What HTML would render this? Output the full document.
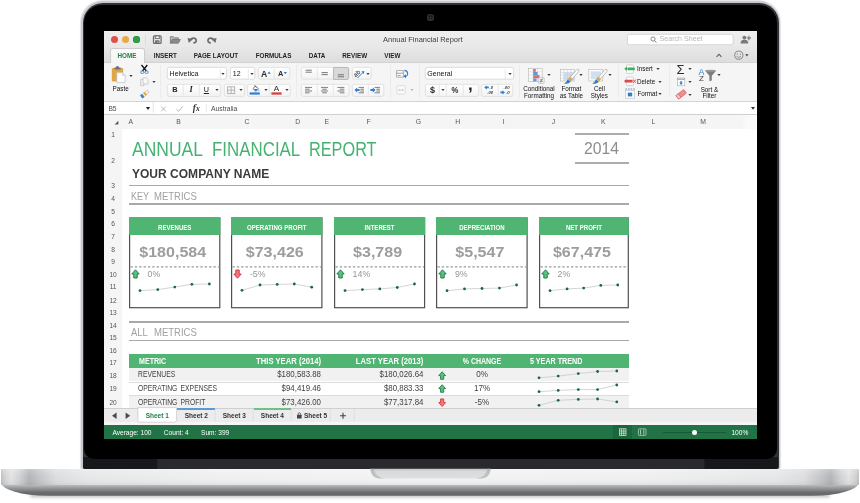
<!DOCTYPE html>
<html lang="en">
<head>
<meta charset="utf-8">
<title>Annual Financial Report</title>
<style>
html,body{margin:0;padding:0;background:#fff;}
body{width:860px;height:503px;overflow:hidden;font-family:"Liberation Sans",sans-serif;}
#stage{position:relative;width:860px;height:503px;overflow:hidden;background:#fff;}
.a{position:absolute;}
.t{position:absolute;white-space:nowrap;line-height:1;transform-origin:0 50%;}
.tc{position:absolute;white-space:nowrap;line-height:1;text-align:center;}
.tr{position:absolute;white-space:nowrap;line-height:1;text-align:right;transform-origin:100% 50%;}
svg{overflow:visible;}
/* ---------- laptop ---------- */
#lidrim{left:80.6px;top:0.8px;width:699.9px;height:468.2px;border-radius:22px 22px 2px 2px;background:#c6c8cc;box-shadow:0 0 0.8px 0.3px #e4e5e8;}
#lid{left:82.5px;top:3px;width:696.3px;height:466px;border-radius:20px 20px 2px 2px;background:#303236;}
#lidin{left:84.2px;top:4.8px;width:692.9px;height:454.4px;border-radius:18px 18px 10px 10px;background:#000;}
#hinge{left:83px;top:457px;width:695.3px;height:12px;background:linear-gradient(90deg,#17181b 0,#17181b 10.6%,#282a2e 10.8%,#282a2e 89.3%,#17181b 89.5%);border-radius:0 0 2px 2px;}
#cam{left:427.4px;top:14.2px;width:6.4px;height:6.4px;border-radius:50%;background:radial-gradient(circle at 50% 45%,#1b1d20 0,#1b1d20 30%,#3a3c40 75%,#2a2c30 100%);}
#cam i{position:absolute;left:2.6px;top:2.4px;width:1.2px;height:1.2px;border-radius:50%;background:#1f7a3f;}
#screen{left:104px;top:31px;width:653px;height:408px;background:#fff;overflow:hidden;}
/* screen is offset: children use image coords via #o */
#o{position:absolute;left:-104px;top:-31px;width:860px;height:503px;will-change:transform;}
/* ---------- chrome ---------- */
#tbar{left:104px;top:31px;width:653px;height:31.6px;background:linear-gradient(#eeeeee,#e9e9e9 45%,#dddddd);}
#tbarline{left:104px;top:62px;width:653px;height:0.7px;background:#d2d2d2;}
#hometab{left:109.6px;top:47.8px;width:35px;height:15px;background:linear-gradient(#fbfbfb,#f5f5f5);border-radius:2.5px 2.5px 0 0;border:0.6px solid #cdcdcd;border-bottom:none;box-sizing:border-box;}
#ribbon{left:104px;top:62.6px;width:653px;height:38.4px;background:#f5f5f5;}
#ribline{left:104px;top:101px;width:653px;height:1px;background:#d3d3d3;}
.tab{font-weight:bold;font-size:6.3px;color:#1f1f1f;top:52.7px;}
.btn{position:absolute;background:linear-gradient(#fefefe,#f4f4f4);border:0.6px solid #d0d0d0;border-radius:2px;box-sizing:border-box;}
.box{position:absolute;background:#fff;border:0.6px solid #cacaca;border-radius:2px;box-sizing:border-box;}
.dv{position:absolute;width:0.6px;background:#d4d4d4;}
.sep{position:absolute;width:1px;background:#ebebeb;top:65px;height:33px;}
.ar{position:absolute;width:0;height:0;margin-left:-0.3px;border-left:1.7px solid transparent;border-right:1.7px solid transparent;border-top:2.3px solid #3a3a3a;}
.rl{font-size:6.3px;color:#111;}
/* ---------- sheet ---------- */
#fbar{left:104px;top:102px;width:653px;height:12px;background:#fff;}
#fbarline{left:104px;top:114px;width:653px;height:0.7px;background:#d0d0d0;}
#colhdr{left:104px;top:114.6px;width:653px;height:14px;background:linear-gradient(90deg,#f5f5f5 0,#f5f5f5 97.6%,#fafafa 98.6%,#fafafa 99.8%,#fff 100%);}
#rowhdr{left:104px;top:128px;width:17.8px;height:280px;background:#f5f5f5;}
.ch{font-size:6.8px;color:#555;top:119.2px;}
.rh{font-size:6.6px;color:#555;left:104.6px;width:17px;text-align:center;}
.hl{position:absolute;background:#a9a9a9;left:129px;width:500px;}
.card{position:absolute;top:217.4px;width:91px;height:91.4px;box-sizing:border-box;border:1.2px solid #505050;background:#fff;}
.card .h{position:absolute;left:-1px;top:-1px;width:91px;height:18px;background:#50b472;}
.card .ht{position:absolute;left:-1px;width:91px;top:4.9px;text-align:center;color:#fff;font-weight:bold;font-size:7.4px;line-height:1;white-space:nowrap;transform:scaleX(0.82);}
.card .v{position:absolute;left:-3.3px;width:91px;top:25.6px;text-align:center;color:#9d9d9d;font-weight:bold;font-size:14.6px;line-height:1;white-space:nowrap;transform:scaleX(1.08);}
.card .d{position:absolute;left:0;top:47.6px;}
.card .p{position:absolute;left:17.6px;top:52.6px;color:#969696;font-size:8.8px;line-height:1;}
.cht{top:223.6px;color:#fff;font-weight:bold;font-size:7.4px;transform:scaleX(0.82);}
.cv{top:244.5px;color:#9d9d9d;font-weight:bold;font-size:14.6px;transform:scaleX(1.1);}
.cp{top:269.9px;color:#969696;font-size:8.8px;}
.green{background:#50b472;}
.cell{font-size:9.2px;color:#414141;}
.sbt{font-size:6.6px;color:#fff;top:429.6px;}
.sht{font-size:6.5px;color:#333;top:412.9px;font-weight:bold;}
</style>
</head>
<body>
<div id="stage">
  <div id="lidrim" class="a"></div>
  <div id="lid" class="a"></div>
  <div id="hinge" class="a"></div>
  <div id="lidin" class="a"></div>
  <div id="cam" class="a"><i></i></div>
  <svg class="a" style="left:0;top:462px" width="860" height="41" viewBox="0 462 860 41">
    <defs>
      <linearGradient id="btng" x1="0" x2="0" y1="0" y2="1"><stop offset="0" stop-color="#ffffff"/><stop offset="1" stop-color="#f3f3f3"/></linearGradient>
      <linearGradient id="bh" x1="0" x2="860" y1="0" y2="0" gradientUnits="userSpaceOnUse">
        <stop offset="0" stop-color="#b9babc"/><stop offset="0.005" stop-color="#cfd0d2"/><stop offset="0.013" stop-color="#e2e3e4"/>
        <stop offset="0.022" stop-color="#d2d3d5"/><stop offset="0.034" stop-color="#b3b4b7"/><stop offset="0.045" stop-color="#c3c4c6"/><stop offset="0.065" stop-color="#dcdddf"/><stop offset="0.1" stop-color="#e6e7e8"/>
        <stop offset="0.25" stop-color="#efeff0"/><stop offset="0.5" stop-color="#f3f3f4"/><stop offset="0.75" stop-color="#efeff0"/>
        <stop offset="0.9" stop-color="#e6e7e8"/><stop offset="0.935" stop-color="#dcdddf"/><stop offset="0.955" stop-color="#c3c4c6"/><stop offset="0.966" stop-color="#b3b4b7"/><stop offset="0.978" stop-color="#d2d3d5"/>
        <stop offset="0.987" stop-color="#e2e3e4"/><stop offset="0.995" stop-color="#cfd0d2"/><stop offset="1" stop-color="#b9babc"/>
      </linearGradient>
      <filter id="blur1" x="-5%" y="-100%" width="110%" height="300%"><feGaussianBlur stdDeviation="1.6"/></filter>
      <linearGradient id="bt" x1="0" x2="0" y1="469" y2="485" gradientUnits="userSpaceOnUse"><stop offset="0" stop-color="#fff" stop-opacity="0.25"/><stop offset="0.5" stop-color="#fff" stop-opacity="0"/><stop offset="1" stop-color="#000" stop-opacity="0.06"/></linearGradient>
      <linearGradient id="bv" x1="0" x2="0" y1="484" y2="496" gradientUnits="userSpaceOnUse">
        <stop offset="0" stop-color="#c6c7c9"/><stop offset="0.3" stop-color="#9d9ea0"/><stop offset="0.7" stop-color="#6c6d6f"/><stop offset="1" stop-color="#626365"/>
      </linearGradient>
      <linearGradient id="bs" x1="0" x2="0" y1="494" y2="501" gradientUnits="userSpaceOnUse">
        <stop offset="0" stop-color="#bdbdbd"/><stop offset="1" stop-color="#ffffff"/>
      </linearGradient>
      <linearGradient id="nt" x1="0" x2="0" y1="469" y2="478" gradientUnits="userSpaceOnUse">
        <stop offset="0" stop-color="#c2c3c5"/><stop offset="0.25" stop-color="#d8d9da"/><stop offset="1" stop-color="#dedfe0"/>
      </linearGradient>
    </defs>
    <rect x="30" y="493" width="800" height="4.5" rx="2" fill="#9a9a9a" opacity="0.55" filter="url(#blur1)"/>
    <path d="M1.5 484 H858.5 Q857 488 846 491.5 Q832 495.8 812 495.8 H48 Q28 495.8 14 491.5 Q3 488 1.5 484Z" fill="url(#bv)"/>
    <path d="M1 470.2 Q1 469 2.2 469 H857.8 Q859 469 859 470.2 V484 Q859 485 857.5 485 H2.5 Q1 485 1 484Z" fill="url(#bh)"/>
    <rect x="1" y="469" width="858" height="16" fill="url(#bt)"/>
    <path d="M370.2 468.8 H490.8 Q489.6 478.4 481.6 478.4 H379.4 Q371.4 478.4 370.2 468.8Z" fill="url(#nt)"/>
    <path d="M370.2 468.8 Q371.4 478.4 379.4 478.4 H385 Q376 478 373.4 468.8Z" fill="#a9aaac" opacity="0.55"/>
    <path d="M490.8 468.8 Q489.6 478.4 481.6 478.4 H476 Q485 478 487.6 468.8Z" fill="#a9aaac" opacity="0.55"/>
  </svg>
  <div id="screen" class="a"><div id="o">
    <!-- title + tab row -->
    <div id="tbar" class="a"></div>
    <div id="tbarline" class="a"></div>
    <div id="ribbon" class="a"></div>
    <div id="hometab" class="a"></div>
    <div id="ribline" class="a"></div>
    <!-- traffic lights -->
    <div class="a" style="left:110.6px;top:36px;width:7px;height:7px;border-radius:50%;background:#e0504b;"></div>
    <div class="a" style="left:121.8px;top:36px;width:7px;height:7px;border-radius:50%;background:#e6aa47;"></div>
    <div class="a" style="left:132.9px;top:36px;width:7px;height:7px;border-radius:50%;background:#2f9f47;box-shadow:inset 0 0 0 0.6px #1f8a3a;"></div>
    <div class="a" style="left:145.4px;top:35px;width:1px;height:9.5px;background:#dcdcdc;"></div>
    <!-- quick access icons -->
    <svg class="a" style="left:152px;top:34px" width="66" height="11" viewBox="152 34 66 11">
      <g fill="none" stroke="#6c6c6c">
        <rect x="153.5" y="35.9" width="7.6" height="7.4" rx="0.9" stroke-width="1.25"/>
        <rect x="155.3" y="36" width="4" height="2.6" stroke-width="0.9" fill="#f2f2f2"/>
        <rect x="155.6" y="40.8" width="3.4" height="2.5" stroke-width="0.9" fill="#6c6c6c"/>
        <path d="M157.9 41.4 V43" stroke="#e9e9e9" stroke-width="0.7"/>
      </g>
      <g stroke="#6e6e6e" stroke-width="0.7">
        <path d="M170.4 43.2 V36.6 H173.4 L174.4 37.8 H178.4 V39.4 H172.2 Z" fill="#b9b9b9"/>
        <path d="M170.5 43.2 L172.4 39.4 H180.4 L178.4 43.2 Z" fill="#8a8a8a"/>
      </g>
      <g fill="none" stroke="#6c6c6c" stroke-width="1.7">
        <path d="M190.6 40.4 C191.4 37.4 195.6 37.2 196.2 40.2 C196.5 41.9 195.4 42.9 193.4 42.9"/>
        <path d="M213.6 40.4 C212.8 37.4 208.6 37.2 208 40.2 C207.7 41.9 208.8 42.9 210.8 42.9"/>
      </g>
      <path d="M187.6 38 L192.8 38.9 L188.8 43 Z" fill="#6c6c6c"/>
      <path d="M216.6 38 L211.4 38.9 L215.4 43 Z" fill="#6c6c6c"/>
    </svg>
    <div class="tc" style="left:322.8px;width:200px;top:36.4px;font-size:7.46px;color:#3c3c3c;">Annual Financial Report</div>
    <!-- search box -->
    <svg class="a" style="left:626.2px;top:33.0px" width="108.5" height="13.1" viewBox="626.2 33.0 108.5 13.1"><rect x="627.55" y="34.35" width="105.80" height="10.40" rx="2" fill="#fff" stroke="#c8c8c8" stroke-width="0.7"/></svg>
    <svg class="a" style="left:650px;top:35px" width="8" height="9" viewBox="650 35 8 9"><circle cx="653" cy="39" r="2.1" fill="none" stroke="#6e6e6e" stroke-width="0.8"/><path d="M654.5 40.6 L656.4 42.6" stroke="#6e6e6e" stroke-width="0.9"/></svg>
    <div class="t" style="left:659.6px;top:36.2px;font-size:7.1px;color:#b6b6b6;">Search Sheet</div>
    <!-- share person -->
    <svg class="a" style="left:739px;top:34px" width="13" height="11" viewBox="739 34 13 11">
      <circle cx="744.4" cy="37.6" r="1.9" fill="#7a7a7a"/>
      <path d="M740.6 43.4 C740.6 40.4 742.4 39.8 744.4 39.8 C746.4 39.8 748.2 40.4 748.2 43.4 Z" fill="#7a7a7a"/>
      <path d="M748.9 35.8 V40.2 M746.7 38 H751.1" stroke="#707070" stroke-width="1.1"/>
    </svg>
    <!-- collapse chevron + smiley -->
    <svg class="a" style="left:715px;top:50px" width="40" height="11" viewBox="715 50 40 11">
      <path d="M716.6 56.8 L719 54.2 L721.4 56.8" fill="none" stroke="#5a5a5a" stroke-width="1.1"/>
      <circle cx="738.8" cy="55.2" r="4.1" fill="none" stroke="#5f5f5f" stroke-width="0.7"/>
      <circle cx="737.3" cy="54" r="0.55" fill="#5f5f5f"/><circle cx="740.3" cy="54" r="0.55" fill="#5f5f5f"/>
      <path d="M736.6 56.4 Q738.8 58.4 741 56.4" fill="none" stroke="#5f5f5f" stroke-width="0.6"/>
      <path d="M745.2 54.3 H748.6 L746.9 56.5 Z" fill="#4a4a4a"/>
    </svg>
    <!-- tabs -->
    <div class="tc tab" style="left:109.8px;width:34.4px;color:#1f7f45;">HOME</div>
    <div class="t tab" style="left:153.8px;">INSERT</div>
    <div class="t tab" style="left:193.7px;">PAGE LAYOUT</div>
    <div class="t tab" style="left:255.7px;">FORMULAS</div>
    <div class="t tab" style="left:308.8px;">DATA</div>
    <div class="t tab" style="left:342.3px;">REVIEW</div>
    <div class="t tab" style="left:384.3px;">VIEW</div>
    <!-- ===== ribbon ===== -->
    <!-- paste -->
    <svg class="a" style="left:110px;top:64px" width="24" height="22" viewBox="110 64 24 22">
      <rect x="111.8" y="68" width="11.4" height="13.6" rx="1" fill="#e2a545"/>
      <path d="M114.4 68.6 V67.6 H116 C116 65.6 119 65.6 119 67.6 H120.6 V68.6 Q120.6 69.6 119.6 69.6 H115.4 Q114.4 69.6 114.4 68.6Z" fill="#6f7276"/>
      <path d="M116.8 72.6 H122.6 L125.2 75.2 V82.6 H116.8 Z" fill="#fbfbfb" stroke="#b9b9b9" stroke-width="0.6"/>
      <path d="M122.6 72.6 V75.2 H125.2" fill="#e6e6e6" stroke="#b9b9b9" stroke-width="0.5"/>
    </svg>
    <svg class="a" style="left:128.4px;top:73.6px" width="6" height="5" viewBox="128.4 73.6 6 5"><path d="M129.80 74.60 H133.00 L131.40 76.70 Z" fill="#3a3a3a"/></svg>
    <div class="tc rl" style="left:105.6px;width:30px;top:86.3px;">Paste</div>
    <!-- cut -->
    <svg class="a" style="left:139px;top:63px" width="12" height="12" viewBox="139 63 12 12">
      <path d="M141.5 65 L146.4 71 M147.3 65 L142.4 71" stroke="#111" stroke-width="1.3" fill="none"/>
      <ellipse cx="142.3" cy="72.2" rx="1.7" ry="1.3" fill="none" stroke="#3a86d8" stroke-width="0.9"/>
      <ellipse cx="146.6" cy="72.2" rx="1.7" ry="1.3" fill="none" stroke="#3a86d8" stroke-width="0.9"/>
    </svg>
    <!-- copy -->
    <svg class="a" style="left:139px;top:76px" width="18" height="11" viewBox="139 76 18 11">
      <path d="M140.6 79.4 H144 V85.6 H140.6 Z" fill="#f3f3f3" stroke="#bdbdbd" stroke-width="0.7"/>
      <path d="M143 77.8 H146.4 L148 79.4 V84 H143 Z" fill="#f8f8f8" stroke="#bdbdbd" stroke-width="0.7"/>
    </svg>
    <svg class="a" style="left:150.8px;top:79.8px" width="6" height="5" viewBox="150.8 79.8 6 5"><path d="M152.20 80.80 H155.40 L153.80 82.90 Z" fill="#3a3a3a"/></svg>
    <!-- format painter -->
    <svg class="a" style="left:139px;top:89px" width="12" height="11" viewBox="139 89 12 11">
      <g transform="translate(144.4 94.4) scale(0.84) translate(-144.4 -94.4) rotate(-40 144.4 94.4)">
        <rect x="146.2" y="92.8" width="4.2" height="3" rx="0.8" fill="#fbfbfb" stroke="#9a9a9a" stroke-width="0.6"/>
        <rect x="144" y="92" width="2.4" height="4.8" fill="#e6a640"/>
        <rect x="142.6" y="92" width="1.5" height="4.8" fill="#f4f4f4"/>
        <path d="M139.8 92 H142.7 V96.8 H139.8 Q138.8 94.4 139.8 92Z" fill="#2f78c7"/>
        <path d="M141.4 92 V96.8" stroke="#8fbbe8" stroke-width="0.5"/>
      </g>
    </svg>
    <div class="sep" style="left:160.3px;"></div>
    <!-- font name / size -->
    <svg class="a" style="left:166.0px;top:66.2px" width="61.8" height="14.5" viewBox="166.0 66.2 61.8 14.5"><rect x="167.35" y="67.55" width="59.10" height="11.80" rx="2" fill="#fff" stroke="#cdcdcd" stroke-width="0.7"/></svg>
    <div class="t" style="left:169.6px;top:70.2px;font-size:7px;color:#111;">Helvetica</div>
    <svg class="a" style="left:218.5px;top:68.6px" width="3" height="10.0" viewBox="218.5 68.6 3 10.0"><path d="M219.80 68.60 V78.60" stroke="#e0e0e0" stroke-width="0.7"/></svg>
    <svg class="a" style="left:220.2px;top:71.8px" width="6" height="5" viewBox="220.2 71.8 6 5"><path d="M221.60 72.80 H224.80 L223.20 74.90 Z" fill="#3a3a3a"/></svg>
    <svg class="a" style="left:228.8px;top:66.2px" width="27.2" height="14.5" viewBox="228.8 66.2 27.2 14.5"><rect x="230.15" y="67.55" width="24.50" height="11.80" rx="2" fill="#fff" stroke="#cdcdcd" stroke-width="0.7"/></svg>
    <div class="t" style="left:232.8px;top:70.2px;font-size:7px;color:#111;">12</div>
    <svg class="a" style="left:247.0px;top:68.6px" width="3" height="10.0" viewBox="247.0 68.6 3 10.0"><path d="M248.30 68.60 V78.60" stroke="#e0e0e0" stroke-width="0.7"/></svg>
    <svg class="a" style="left:248.6px;top:71.8px" width="6" height="5" viewBox="248.6 71.8 6 5"><path d="M250.00 72.80 H253.20 L251.60 74.90 Z" fill="#3a3a3a"/></svg>
    <!-- grow/shrink font -->
    <svg class="a" style="left:257.4px;top:66.2px" width="34.2" height="14.5" viewBox="257.4 66.2 34.2 14.5"><rect x="258.75" y="67.55" width="31.50" height="11.80" rx="2" fill="url(#btng)" stroke="#d9d9d9" stroke-width="0.7"/></svg>
    <svg class="a" style="left:273.3px;top:68.0px" width="3" height="11.3" viewBox="273.3 68.0 3 11.3"><path d="M274.60 68.00 V79.30" stroke="#e0e0e0" stroke-width="0.7"/></svg>
    <div class="t" style="left:260.8px;top:69px;font-size:9.4px;font-weight:bold;color:#2a2a2a;transform:scaleX(0.92);">A</div>
    <div class="t" style="left:277.8px;top:70.2px;font-size:8px;font-weight:bold;color:#2a2a2a;transform:scaleX(0.92);">A</div>
    <svg class="a" style="left:258px;top:67px" width="33" height="13" viewBox="258 67 33 13">
      <path d="M267.4 73.8 L269.1 71.6 L270.8 73.8 Z" fill="#2f7fd6"/>
      <path d="M283.6 72 L285.3 74.2 L287 72 Z" fill="#2f7fd6"/>
    </svg>
    <!-- B I U -->
    <svg class="a" style="left:166.0px;top:82.5px" width="56.0" height="14.8" viewBox="166.0 82.5 56.0 14.8"><rect x="167.35" y="83.85" width="53.30" height="12.10" rx="2" fill="url(#btng)" stroke="#d9d9d9" stroke-width="0.7"/></svg>
    <svg class="a" style="left:181.8px;top:84.3px" width="3" height="11.3" viewBox="181.8 84.3 3 11.3"><path d="M183.10 84.30 V95.60" stroke="#e0e0e0" stroke-width="0.7"/></svg>
    <svg class="a" style="left:198.0px;top:84.3px" width="3" height="11.3" viewBox="198.0 84.3 3 11.3"><path d="M199.30 84.30 V95.60" stroke="#e0e0e0" stroke-width="0.7"/></svg>
    <div class="tc" style="left:167px;width:16px;top:86.4px;font-size:7.4px;font-weight:bold;color:#222;">B</div>
    <div class="tc" style="left:183px;width:16px;top:86.4px;font-size:8.2px;font-style:italic;font-family:'Liberation Serif',serif;font-weight:bold;color:#222;margin-top:-0.5px;">I</div>
    <div class="tc" style="left:199.4px;width:14px;top:86.4px;font-size:7.2px;color:#222;text-decoration:underline;">U</div>
    <svg class="a" style="left:214.0px;top:88.2px" width="6" height="5" viewBox="214.0 88.2 6 5"><path d="M215.40 89.20 H218.60 L217.00 91.30 Z" fill="#3a3a3a"/></svg>
    <!-- borders -->
    <svg class="a" style="left:222.7px;top:82.5px" width="22.8" height="14.8" viewBox="222.7 82.5 22.8 14.8"><rect x="224.05" y="83.85" width="20.10" height="12.10" rx="2" fill="url(#btng)" stroke="#d9d9d9" stroke-width="0.7"/></svg>
    <svg class="a" style="left:226px;top:85px" width="10" height="10" viewBox="226 85 10 10">
      <rect x="227.6" y="86.8" width="7" height="6.8" fill="none" stroke="#b2b2b2" stroke-width="1"/>
      <path d="M231.1 86.8 V93.6 M227.6 90.2 H234.6" stroke="#b2b2b2" stroke-width="1"/>
    </svg>
    <svg class="a" style="left:238.0px;top:88.2px" width="6" height="5" viewBox="238.0 88.2 6 5"><path d="M239.40 89.20 H242.60 L241.00 91.30 Z" fill="#3a3a3a"/></svg>
    <!-- fill / font colour -->
    <svg class="a" style="left:246.0px;top:82.5px" width="45.6" height="14.8" viewBox="246.0 82.5 45.6 14.8"><rect x="247.35" y="83.85" width="42.90" height="12.10" rx="2" fill="url(#btng)" stroke="#d9d9d9" stroke-width="0.7"/></svg>
    <svg class="a" style="left:268.0px;top:84.3px" width="3" height="11.3" viewBox="268.0 84.3 3 11.3"><path d="M269.30 84.30 V95.60" stroke="#e0e0e0" stroke-width="0.7"/></svg>
    <svg class="a" style="left:247px;top:84px" width="44" height="12" viewBox="247 84 44 12">
      <rect x="249.6" y="92.4" width="10.2" height="2.2" fill="#2f7fd6"/>
      <path d="M253 88.4 L255.6 86 L258.4 88.8 L255.8 91.4 Z" fill="#fff" stroke="#444" stroke-width="0.7"/>
      <path d="M254.4 85.2 L256.4 87.6" stroke="#444" stroke-width="0.7"/>
      <path d="M253.4 89 L258 89 L255.8 91.2 Z" fill="#2f7fd6"/>
      <path d="M258.9 89.4 Q260 91 258.9 91.6 Q257.9 91 258.9 89.4Z" fill="#2f7fd6"/>
      <rect x="271.4" y="92.4" width="10.2" height="2.2" fill="#d8393b"/>
    </svg>
    <svg class="a" style="left:262.6px;top:88.2px" width="6" height="5" viewBox="262.6 88.2 6 5"><path d="M264.00 89.20 H267.20 L265.60 91.30 Z" fill="#3a3a3a"/></svg>
    <div class="tc" style="left:271.4px;width:10.2px;top:85px;font-size:8px;color:#2a2a2a;">A</div>
    <svg class="a" style="left:284.0px;top:88.2px" width="6" height="5" viewBox="284.0 88.2 6 5"><path d="M285.40 89.20 H288.60 L287.00 91.30 Z" fill="#3a3a3a"/></svg>
    <div class="sep" style="left:295.6px;"></div>
    <!-- vertical align -->
    <svg class="a" style="left:299.6px;top:66.2px" width="50.4" height="14.5" viewBox="299.6 66.2 50.4 14.5"><rect x="300.95" y="67.55" width="47.70" height="11.80" rx="2" fill="url(#btng)" stroke="#d9d9d9" stroke-width="0.7"/></svg>
    <div class="a" style="left:332.6px;top:67.2px;width:16.4px;height:12.5px;background:#d9d9d9;border:0.6px solid #b9b9b9;border-radius:0 2px 2px 0;box-sizing:border-box;"></div>
    <svg class="a" style="left:315.5px;top:68.0px" width="3" height="11.3" viewBox="315.5 68.0 3 11.3"><path d="M316.80 68.00 V79.30" stroke="#e0e0e0" stroke-width="0.7"/></svg>
    <svg class="a" style="left:300px;top:67px" width="50" height="13" viewBox="300 67 50 13">
      <path d="M305.6 70.2 H311.8 M305.6 72.2 H311.8" stroke="#555" stroke-width="0.8"/>
      <path d="M321.6 72.6 H327.8 M321.6 74.6 H327.8" stroke="#555" stroke-width="0.8"/>
      <path d="M337.8 74.8 H344 M337.8 76.8 H344" stroke="#555" stroke-width="0.8"/>
    </svg>
    <!-- orientation -->
    <svg class="a" style="left:350.8px;top:66.2px" width="21.6" height="14.5" viewBox="350.8 66.2 21.6 14.5"><rect x="352.15" y="67.55" width="18.90" height="11.80" rx="2" fill="url(#btng)" stroke="#d9d9d9" stroke-width="0.7"/></svg>
    <svg class="a" style="left:352px;top:67px" width="20" height="13" viewBox="352 67 20 13">
      <text x="353.6" y="75.6" font-size="6.4" fill="#222" font-family="Liberation Sans, sans-serif" transform="rotate(-42 357 74)">ab</text>
      <path d="M357.4 78 L363 72.4" stroke="#2f7fd6" stroke-width="1"/>
      <path d="M364.4 71 L361.4 71.6 L363.8 74 Z" fill="#2f7fd6"/>
    </svg>
    <svg class="a" style="left:364.8px;top:71.8px" width="6" height="5" viewBox="364.8 71.8 6 5"><path d="M366.20 72.80 H369.40 L367.80 74.90 Z" fill="#3a3a3a"/></svg>
    <!-- horizontal align -->
    <svg class="a" style="left:299.6px;top:82.5px" width="50.4" height="14.8" viewBox="299.6 82.5 50.4 14.8"><rect x="300.95" y="83.85" width="47.70" height="12.10" rx="2" fill="url(#btng)" stroke="#d9d9d9" stroke-width="0.7"/></svg>
    <svg class="a" style="left:315.5px;top:84.3px" width="3" height="11.3" viewBox="315.5 84.3 3 11.3"><path d="M316.80 84.30 V95.60" stroke="#e0e0e0" stroke-width="0.7"/></svg>
    <svg class="a" style="left:331.6px;top:84.3px" width="3" height="11.3" viewBox="331.6 84.3 3 11.3"><path d="M332.90 84.30 V95.60" stroke="#e0e0e0" stroke-width="0.7"/></svg>
    <svg class="a" style="left:300px;top:83px" width="50" height="14" viewBox="300 83 50 14">
      <path d="M305 87.4 H312 M305 89.2 H309.6 M305 91 H312 M305 92.8 H309.6" stroke="#555" stroke-width="0.75"/>
      <path d="M321 87.4 H328 M322.2 89.2 H326.8 M321 91 H328 M322.2 92.8 H326.8" stroke="#555" stroke-width="0.75"/>
      <path d="M337.4 87.4 H344.4 M339.8 89.2 H344.4 M337.4 91 H344.4 M339.8 92.8 H344.4" stroke="#555" stroke-width="0.75"/>
    </svg>
    <!-- indent -->
    <svg class="a" style="left:350.8px;top:82.5px" width="34.2" height="14.8" viewBox="350.8 82.5 34.2 14.8"><rect x="352.15" y="83.85" width="31.50" height="12.10" rx="2" fill="url(#btng)" stroke="#d9d9d9" stroke-width="0.7"/></svg>
    <svg class="a" style="left:366.6px;top:84.3px" width="3" height="11.3" viewBox="366.6 84.3 3 11.3"><path d="M367.90 84.30 V95.60" stroke="#e0e0e0" stroke-width="0.7"/></svg>
    <svg class="a" style="left:352px;top:83px" width="33" height="14" viewBox="352 83 33 14">
      <path d="M358.6 87.4 H364 M360.4 89.2 H364 M360.4 91 H364 M358.6 92.8 H364" stroke="#555" stroke-width="0.75"/>
      <path d="M354.4 90.1 L357.2 87.6 V89.1 H359.6 V91.1 H357.2 V92.6 Z" fill="#2f7fd6"/>
      <path d="M374.6 87.4 H380 M376.4 89.2 H380 M376.4 91 H380 M374.6 92.8 H380" stroke="#555" stroke-width="0.75"/>
      <path d="M375.6 90.1 L372.8 87.6 V89.1 H370.4 V91.1 H372.8 V92.6 Z" fill="#2f7fd6"/>
    </svg>
    <div class="sep" style="left:390px;"></div>
    <!-- wrap / merge -->
    <svg class="a" style="left:395px;top:68px" width="20" height="28" viewBox="395 68 20 28">
      <path d="M396.6 70.6 H403.4 V77.2 H396.6 Z" fill="#fdfdfd" stroke="#8e8e8e" stroke-width="0.7"/>
      <path d="M396.6 73.2 H403.4 M397.8 75.4 H400.8" stroke="#7a7a7a" stroke-width="0.7"/>
      <path d="M404.4 70.4 C408.6 70.6 408.6 76.4 405.2 76.4" fill="none" stroke="#2f7fd6" stroke-width="1.1"/>
      <path d="M403.2 76.2 L406 74.2 V78.2 Z" fill="#2f7fd6"/>
      <rect x="396.9" y="85.7" width="8.4" height="8.4" rx="0.8" fill="#fafafa" stroke="#d3d3d3" stroke-width="0.7"/>
      <path d="M398.8 90 H403.4" stroke="#aac8ea" stroke-width="0.8"/>
      <path d="M398.2 90 L399.8 88.9 V91.1 Z M404 90 L402.4 88.9 V91.1 Z" fill="#aac8ea"/>
    </svg>
    <svg class="a" style="left:408.6px;top:88.4px" width="6" height="5" viewBox="408.6 88.4 6 5"><path d="M410.00 89.40 H413.20 L411.60 91.50 Z" fill="#b5b5b5"/></svg>
    <div class="sep" style="left:419.3px;"></div>
    <!-- number format -->
    <svg class="a" style="left:423.6px;top:66.2px" width="91.0" height="14.5" viewBox="423.6 66.2 91.0 14.5"><rect x="424.95" y="67.55" width="88.30" height="11.80" rx="2" fill="#fff" stroke="#cdcdcd" stroke-width="0.7"/></svg>
    <div class="t" style="left:427.3px;top:70.2px;font-size:7px;color:#111;">General</div>
    <svg class="a" style="left:504.4px;top:68.6px" width="3" height="10.0" viewBox="504.4 68.6 3 10.0"><path d="M505.70 68.60 V78.60" stroke="#e0e0e0" stroke-width="0.7"/></svg>
    <svg class="a" style="left:506.6px;top:71.8px" width="6" height="5" viewBox="506.6 71.8 6 5"><path d="M508.00 72.80 H511.20 L509.60 74.90 Z" fill="#3a3a3a"/></svg>
    <svg class="a" style="left:423.6px;top:82.5px" width="56.0" height="14.8" viewBox="423.6 82.5 56.0 14.8"><rect x="424.95" y="83.85" width="53.30" height="12.10" rx="2" fill="url(#btng)" stroke="#d9d9d9" stroke-width="0.7"/></svg>
    <svg class="a" style="left:438.0px;top:84.3px" width="3" height="11.3" viewBox="438.0 84.3 3 11.3"><path d="M439.30 84.30 V95.60" stroke="#e0e0e0" stroke-width="0.7"/></svg>
    <svg class="a" style="left:445.4px;top:84.3px" width="3" height="11.3" viewBox="445.4 84.3 3 11.3"><path d="M446.70 84.30 V95.60" stroke="#e0e0e0" stroke-width="0.7"/></svg>
    <svg class="a" style="left:461.5px;top:84.3px" width="3" height="11.3" viewBox="461.5 84.3 3 11.3"><path d="M462.80 84.30 V95.60" stroke="#e0e0e0" stroke-width="0.7"/></svg>
    <div class="tc" style="left:426.4px;width:12px;top:85.6px;font-size:9px;font-weight:bold;color:#2a2a2a;">$</div>
    <svg class="a" style="left:439.8px;top:88.2px" width="6" height="5" viewBox="439.8 88.2 6 5"><path d="M441.20 89.20 H444.40 L442.80 91.30 Z" fill="#3a3a3a"/></svg>
    <div class="tc" style="left:446.6px;width:16px;top:85.8px;font-size:8.6px;font-weight:bold;color:#2a2a2a;transform:scaleX(0.9);">%</div>
    <div class="tc" style="left:462.4px;width:16px;top:76.2px;font-size:17px;font-weight:bold;color:#222;">,</div>
    <svg class="a" style="left:480.4px;top:82.5px" width="34.2" height="14.8" viewBox="480.4 82.5 34.2 14.8"><rect x="481.75" y="83.85" width="31.50" height="12.10" rx="2" fill="url(#btng)" stroke="#d9d9d9" stroke-width="0.7"/></svg>
    <svg class="a" style="left:496.6px;top:84.3px" width="3" height="11.3" viewBox="496.6 84.3 3 11.3"><path d="M497.90 84.30 V95.60" stroke="#e0e0e0" stroke-width="0.7"/></svg>
    <svg class="a" style="left:481px;top:83px" width="33" height="14" viewBox="481 83 33 14">
      <g font-family="Liberation Sans, sans-serif" font-size="4.3" font-weight="bold" font-style="italic" fill="#3a3a3a">
        <text x="489.6" y="89">.0</text><text x="487.2" y="93.8">.00</text>
        <text x="503.6" y="89">.00</text><text x="506" y="93.8">.0</text>
      </g>
      <path d="M484.2 87.4 L486.8 85.2 V86.5 H488.8 V88.3 H486.8 V89.6 Z" fill="#2f7fd6"/>
      <path d="M505 92.4 L502.4 90.2 V91.5 H500.4 V93.3 H502.4 V94.6 Z" fill="#2f7fd6"/>
    </svg>
    <div class="sep" style="left:518.7px;"></div>
    <!-- conditional formatting -->
    <svg class="a" style="left:527px;top:67px" width="24" height="18" viewBox="527 66 24 18">
      <rect x="528.6" y="67.6" width="13.6" height="13" fill="#fcfcfc" stroke="#b5b5b5" stroke-width="0.6"/>
      <path d="M533 67.6 V80.6 M537.6 67.6 V80.6 M528.6 70.8 H542.2 M528.6 74 H542.2 M528.6 77.2 H542.2" stroke="#cfcfcf" stroke-width="0.5"/>
      <rect x="533.2" y="68" width="2.6" height="2.8" fill="#e26a6a"/>
      <rect x="533.2" y="71" width="4.4" height="3" fill="#5b9bd8"/>
      <rect x="533.2" y="74.2" width="6.4" height="3" fill="#e26a6a"/>
      <rect x="533.2" y="77.4" width="3.4" height="3" fill="#5b9bd8"/>
      <rect x="538.4" y="76.6" width="5.8" height="5.8" rx="0.8" fill="#f7f7f7" stroke="#9a9a9a" stroke-width="0.5"/>
      <path d="M539.8 78.8 H542.8 M539.8 80.4 H542.8 M542.4 77.6 L540.2 81.6" stroke="#444" stroke-width="0.5"/>
    </svg>
    <svg class="a" style="left:545.8px;top:73.4px" width="6" height="5" viewBox="545.8 73.4 6 5"><path d="M547.20 74.40 H550.40 L548.80 76.50 Z" fill="#3a3a3a"/></svg>
    <div class="tc rl" style="left:519px;width:40px;top:86.2px;line-height:6.7px;">Conditional<br>Formatting</div>
    <!-- format as table -->
    <svg class="a" style="left:559px;top:66.6px" width="24" height="18" viewBox="559 66 24 18">
      <rect x="560.6" y="68.6" width="14" height="11.4" fill="#fcfcfc" stroke="#b5b5b5" stroke-width="0.6"/>
      <rect x="563.8" y="71.4" width="10.8" height="8.6" fill="#cfe0f3"/>
      <path d="M563.8 68.6 V80 M567.4 68.6 V80 M571 68.6 V80 M560.6 71.4 H574.6 M560.6 74.2 H574.6 M560.6 77.2 H574.6" stroke="#c4c9cf" stroke-width="0.5"/>
      <path d="M576.8 68.6 Q578 67.8 578.8 68.8 Q579.4 69.6 578.6 70.6 L572.4 78 L570.2 76.2 Z" fill="#fafafa" stroke="#9a9a9a" stroke-width="0.6"/>
      <path d="M569.8 75.8 L572.8 78.2 L570.6 80.8 L567.6 78.4 Z" fill="#e6a640"/>
      <path d="M567.6 78.4 L570.6 80.8 Q568.2 83.6 564 82.6 Q566.8 81.2 567.6 78.4Z" fill="#2f78c7"/>
    </svg>
    <svg class="a" style="left:578.2px;top:73.4px" width="6" height="5" viewBox="578.2 73.4 6 5"><path d="M579.60 74.40 H582.80 L581.20 76.50 Z" fill="#3a3a3a"/></svg>
    <div class="tc rl" style="left:551.4px;width:40px;top:86.2px;line-height:6.7px;">Format<br>as Table</div>
    <!-- cell styles -->
    <svg class="a" style="left:587px;top:66.6px" width="24" height="18" viewBox="587 66 24 18">
      <rect x="588.8" y="68.6" width="14" height="11.4" fill="#fcfcfc" stroke="#b5b5b5" stroke-width="0.6"/>
      <rect x="590.6" y="70.4" width="10.4" height="7.8" fill="#cfe0f3"/>
      <path d="M605 68.6 Q606.2 67.8 607 68.8 Q607.6 69.6 606.8 70.6 L600.6 78 L598.4 76.2 Z" fill="#fafafa" stroke="#9a9a9a" stroke-width="0.6"/>
      <path d="M598 75.8 L601 78.2 L598.8 80.8 L595.8 78.4 Z" fill="#e6a640"/>
      <path d="M595.8 78.4 L598.8 80.8 Q596.4 83.6 592.2 82.6 Q595 81.2 595.8 78.4Z" fill="#2f78c7"/>
    </svg>
    <svg class="a" style="left:606.6px;top:73.4px" width="6" height="5" viewBox="606.6 73.4 6 5"><path d="M608.00 74.40 H611.20 L609.60 76.50 Z" fill="#3a3a3a"/></svg>
    <div class="tc rl" style="left:579.4px;width:40px;top:86.2px;line-height:6.7px;">Cell<br>Styles</div>
    <div class="sep" style="left:617.6px;"></div>
    <!-- insert / delete / format -->
    <svg class="a" style="left:623px;top:63px" width="14" height="37" viewBox="623 63 14 37">
      <rect x="626.4" y="64.8" width="7" height="8.6" rx="1" fill="#fdfdfd" stroke="#b9b9b9" stroke-width="0.6"/>
      <rect x="627.4" y="67.4" width="7.4" height="2.8" rx="0.6" fill="#3fae5d"/>
      <path d="M624.2 68.8 L627 66.6 V71 Z" fill="#3fae5d"/>
      <rect x="626.4" y="77" width="7" height="8.6" rx="1" fill="#fdfdfd" stroke="#b9b9b9" stroke-width="0.6"/>
      <rect x="624.6" y="79.8" width="8" height="2.8" rx="0.6" fill="#e0474a"/>
      <path d="M633.2 79.6 L635.8 82.8 M635.8 79.6 L633.2 82.8" stroke="#e0474a" stroke-width="0.9"/>
      <rect x="625.6" y="90.6" width="8.8" height="7.6" fill="#fdfdfd" stroke="#b9b9b9" stroke-width="0.6"/>
      <rect x="627.8" y="92.6" width="4.4" height="3.8" fill="#2f7fd6"/>
      <path d="M625.4 89 H634.6" stroke="#2f7fd6" stroke-width="0.8" stroke-dasharray="1.6 1"/>
    </svg>
    <div class="t rl" style="left:637px;top:65.6px;">Insert</div><svg class="a" style="left:654.8px;top:67.0px" width="6" height="5" viewBox="654.8 67.0 6 5"><path d="M656.20 68.00 H659.40 L657.80 70.10 Z" fill="#3a3a3a"/></svg>
    <div class="t rl" style="left:637px;top:78.7px;">Delete</div><svg class="a" style="left:656.8px;top:79.6px" width="6" height="5" viewBox="656.8 79.6 6 5"><path d="M658.20 80.60 H661.40 L659.80 82.70 Z" fill="#3a3a3a"/></svg>
    <div class="t rl" style="left:637.4px;top:90.8px;">Format</div><svg class="a" style="left:657.4px;top:92.2px" width="6" height="5" viewBox="657.4 92.2 6 5"><path d="M658.80 93.20 H662.00 L660.40 95.30 Z" fill="#3a3a3a"/></svg>
    <div class="sep" style="left:668.8px;"></div>
    <!-- sigma / fill / clear -->
    <div class="t" style="left:676.4px;top:62.6px;font-size:13px;color:#2e2e2e;">Σ</div><svg class="a" style="left:687.2px;top:66.8px" width="6" height="5" viewBox="687.2 66.8 6 5"><path d="M688.60 67.80 H691.80 L690.20 69.90 Z" fill="#3a3a3a"/></svg>
    <svg class="a" style="left:675px;top:76px" width="13" height="24" viewBox="675 76 13 24">
      <rect x="677.4" y="78" width="7.4" height="7.8" fill="#fdfdfd" stroke="#a9a9a9" stroke-width="0.6"/>
      <path d="M677.4 79.2 H684.8" stroke="#8a8a8a" stroke-width="0.9"/>
      <path d="M681.1 85 L679.2 82.8 H680.4 V81 H681.8 V82.8 H683 Z" fill="#2f7fd6"/>
      <g transform="rotate(-38 681.2 94.3)"><rect x="676.2" y="92" width="10" height="4.6" rx="0.8" fill="#ea8e92" stroke="#d4565b" stroke-width="0.6"/><rect x="676.2" y="92" width="3" height="4.6" rx="0.8" fill="#f3c2c4" stroke="#d4565b" stroke-width="0.6"/></g>
    </svg>
    <svg class="a" style="left:687.2px;top:79.8px" width="6" height="5" viewBox="687.2 79.8 6 5"><path d="M688.60 80.80 H691.80 L690.20 82.90 Z" fill="#3a3a3a"/></svg>
    <svg class="a" style="left:687.2px;top:92.6px" width="6" height="5" viewBox="687.2 92.6 6 5"><path d="M688.60 93.60 H691.80 L690.20 95.70 Z" fill="#3a3a3a"/></svg>
    <!-- sort & filter -->
    <div class="t" style="left:698.4px;top:67.6px;font-size:8.8px;color:#2f7fd6;">A</div>
    <div class="t" style="left:699px;top:75.4px;font-size:8px;color:#3c3c3c;">Z</div>
    <svg class="a" style="left:704px;top:69px" width="14" height="14" viewBox="704 69 14 14">
      <path d="M705.2 70.8 H716 L711.8 75.8 V80.6 L709.4 81.2 V75.8 Z" fill="#7d7d7d"/>
      <ellipse cx="710.6" cy="70.8" rx="5.4" ry="1" fill="#9a9a9a"/>
    </svg>
    <svg class="a" style="left:716.0px;top:73.4px" width="6" height="5" viewBox="716.0 73.4 6 5"><path d="M717.40 74.40 H720.60 L719.00 76.50 Z" fill="#3a3a3a"/></svg>
    <div class="tc rl" style="left:689.4px;width:40px;top:86.7px;line-height:6.7px;">Sort &amp;<br>Filter</div>

    <!-- ===== formula bar ===== -->
    <div id="fbar" class="a"></div><div id="fbarline" class="a"></div>
    <div class="t" style="left:108.4px;top:105.7px;font-size:6.7px;color:#4a4a4a;">B5</div>
    <svg class="a" style="left:145.2px;top:106.2px" width="6" height="5" viewBox="145.2 106.2 6 5"><path d="M146.10 107.20 H150.30 L148.20 110.20 Z" fill="#222"/></svg>
    <svg class="a" style="left:152.0px;top:102.4px" width="3" height="10.8" viewBox="152.0 102.4 3 10.8"><path d="M153.30 102.40 V113.20" stroke="#d9d9d9" stroke-width="0.7"/></svg>
    <svg class="a" style="left:158px;top:103.8px" width="50" height="10" viewBox="158 103 50 10"><path d="M161.2 105.6 L165.8 110.4 M165.8 105.6 L161.2 110.4" stroke="#b4b4b4" stroke-width="0.95" fill="none"/><path d="M176.6 108.4 L178.4 110.4 L182.8 105.4" stroke="#b4b4b4" stroke-width="0.95" fill="none"/></svg>
    <div class="t" style="left:192.8px;top:103.4px;font-size:9.6px;color:#333;font-family:'Liberation Serif',serif;font-style:italic;font-weight:bold;">f<span style="font-size:7.6px;">x</span></div>
    <svg class="a" style="left:205.0px;top:103.6px" width="3" height="8.6" viewBox="205.0 103.6 3 8.6"><path d="M206.30 103.60 V112.20" stroke="#dcdcdc" stroke-width="0.7"/></svg>
    <div class="t" style="left:211px;top:105.7px;font-size:6.76px;color:#4a4a4a;">Australia</div>
    <svg class="a" style="left:749.8px;top:106.0px" width="6" height="5" viewBox="749.8 106.0 6 5"><path d="M750.80 107.00 H754.80 L752.80 109.80 Z" fill="#333"/></svg>
    <!-- ===== headers ===== -->
    <div id="colhdr" class="a"></div><div id="rowhdr" class="a"></div>
    <svg class="a" style="left:114px;top:120px" width="5" height="5" viewBox="114 120 5 5"><path d="M118.4 120.8 V124.6 H114.6 Z" fill="#555"/></svg>
    <div class="tc ch" style="left:122.7px;width:16px;">A</div>
    <div class="tc ch" style="left:170.5px;width:16px;">B</div>
    <div class="tc ch" style="left:239.0px;width:16px;">C</div>
    <div class="tc ch" style="left:289.8px;width:16px;">D</div>
    <div class="tc ch" style="left:318.7px;width:16px;">E</div>
    <div class="tc ch" style="left:360.6px;width:16px;">F</div>
    <div class="tc ch" style="left:410.4px;width:16px;">G</div>
    <div class="tc ch" style="left:449.7px;width:16px;">H</div>
    <div class="tc ch" style="left:495.7px;width:16px;">I</div>
    <div class="tc ch" style="left:545.5px;width:16px;">J</div>
    <div class="tc ch" style="left:595.4px;width:16px;">K</div>
    <div class="tc ch" style="left:645.5px;width:16px;">L</div>
    <div class="tc ch" style="left:695.0px;width:16px;">M</div>
    <div class="tc rh" style="top:132.4px;">1</div>
    <div class="tc rh" style="top:157.5px;">2</div>
    <div class="tc rh" style="top:183.0px;">3</div>
    <div class="tc rh" style="top:196.0px;">4</div>
    <div class="tc rh" style="top:208.5px;">5</div>
    <div class="tc rh" style="top:221.2px;">6</div>
    <div class="tc rh" style="top:233.8px;">7</div>
    <div class="tc rh" style="top:246.7px;">8</div>
    <div class="tc rh" style="top:259.2px;">9</div>
    <div class="tc rh" style="top:271.7px;">10</div>
    <div class="tc rh" style="top:284.3px;">11</div>
    <div class="tc rh" style="top:297.5px;">12</div>
    <div class="tc rh" style="top:310.2px;">13</div>
    <div class="tc rh" style="top:322.5px;">14</div>
    <div class="tc rh" style="top:335.1px;">15</div>
    <div class="tc rh" style="top:348.0px;">16</div>
    <div class="tc rh" style="top:360.3px;">17</div>
    <div class="tc rh" style="top:373.3px;">18</div>
    <div class="tc rh" style="top:386.2px;">19</div>
    <div class="tc rh" style="top:399.5px;">20</div>
    <!-- ===== sheet content ===== -->
    <div class="t" style="left:132.4px;top:139.3px;font-size:20.3px;color:#46b272;transform:scaleX(0.862);">ANNUAL</div>
    <div class="t" style="left:212.2px;top:139.3px;font-size:20.3px;color:#46b272;transform:scaleX(0.833);">FINANCIAL</div>
    <div class="t" style="left:308.9px;top:139.3px;font-size:20.3px;color:#46b272;transform:scaleX(0.803);">REPORT</div>
    <div class="t" style="left:131.6px;top:166.6px;font-size:13px;font-weight:bold;color:#3b3b3b;transform:scaleX(0.925);">YOUR COMPANY NAME</div>
    <div class="hl" style="top:185px;height:1px;"></div>
    <div class="t" style="left:131.2px;top:190.6px;font-size:11.5px;color:#a0a0a0;transform:scaleX(0.782);">KEY</div>
    <div class="t" style="left:154.4px;top:190.6px;font-size:11.5px;color:#a0a0a0;transform:scaleX(0.827);">METRICS</div>
    <div class="hl" style="top:203.4px;height:1.4px;"></div>
    <div class="a" style="left:575px;top:133.2px;width:53.8px;height:1.6px;background:#adadad;"></div>
    <div class="a" style="left:575px;top:162.2px;width:53.8px;height:1.6px;background:#adadad;"></div>
    <div class="t" style="left:584.4px;top:140.4px;font-size:17px;color:#8d8d8d;transform:scaleX(0.925);">2014</div>
    <svg class="a" style="left:128.0px;top:216px" width="93.4" height="94" viewBox="128.0 216 93.4 94"><rect x="129.6" y="218.0" width="90.2" height="89.7" fill="#fff" stroke="#505050" stroke-width="1.2"/><rect x="129.0" y="217.4" width="91.4" height="17.6" fill="#50b472"/><path d="M130.4 266.9 H219.4" stroke="#9a9a9a" stroke-width="1.4" stroke-dasharray="2.4 1.97" fill="none"/></svg>
    <div class="tc cht" style="left:129.0px;width:91.4px;">REVENUES</div>
    <div class="tc cv" style="left:126.7px;width:91.4px;">$180,584</div>
    <div class="t cp" style="left:147.6px;">0%</div>
    <svg class="a" style="left:130.8px;top:269px" width="9" height="10" viewBox="0 0 9 10"><path d="M4.5 0.8 L8.2 5 H6.2 V9 H2.8 V5 H0.8 Z" fill="#5cc283" stroke="#1d7a42" stroke-width="0.95" stroke-linejoin="round"/></svg>
    <svg class="a" style="left:136.8px;top:280.7px" width="75.4" height="12.6" viewBox="136.8 280.7 75.4 12.6"><polyline points="139.8,290.3 157.6,289.3 174.6,286.8 191.7,284.0 209.2,283.7" fill="none" stroke="#c9c9c9" stroke-width="0.8"/><g fill="#186a3c"><circle cx="139.8" cy="290.3" r="1.4"/><circle cx="157.6" cy="289.3" r="1.4"/><circle cx="174.6" cy="286.8" r="1.4"/><circle cx="191.7" cy="284.0" r="1.4"/><circle cx="209.2" cy="283.7" r="1.4"/></g></svg>
    <svg class="a" style="left:230.3px;top:216px" width="93.5" height="94" viewBox="230.3 216 93.5 94"><rect x="231.9" y="218.0" width="90.3" height="89.7" fill="#fff" stroke="#505050" stroke-width="1.2"/><rect x="231.3" y="217.4" width="91.5" height="17.6" fill="#50b472"/><path d="M232.7 266.9 H321.8" stroke="#9a9a9a" stroke-width="1.4" stroke-dasharray="2.4 1.97" fill="none"/></svg>
    <div class="tc cht" style="left:231.3px;width:91.5px;">OPERATING PROFIT</div>
    <div class="tc cv" style="left:229.0px;width:91.5px;">$73,426</div>
    <div class="t cp" style="left:249.9px;">-5%</div>
    <svg class="a" style="left:233.10000000000002px;top:269px" width="9" height="10" viewBox="0 0 9 10"><path d="M4.5 9.2 L8.2 5 H6.2 V1 H2.8 V5 H0.8 Z" fill="#f0797e" stroke="#d5343a" stroke-width="0.95" stroke-linejoin="round"/></svg>
    <svg class="a" style="left:239.0px;top:281.0px" width="75.7" height="12.3" viewBox="239.0 281.0 75.7 12.3"><polyline points="242.0,290.3 260.0,285.0 277.2,284.4 294.3,284.0 311.7,287.2" fill="none" stroke="#c9c9c9" stroke-width="0.8"/><g fill="#186a3c"><circle cx="242.0" cy="290.3" r="1.4"/><circle cx="260.0" cy="285.0" r="1.4"/><circle cx="277.2" cy="284.4" r="1.4"/><circle cx="294.3" cy="284.0" r="1.4"/><circle cx="311.7" cy="287.2" r="1.4"/></g></svg>
    <svg class="a" style="left:333.0px;top:216px" width="93.2" height="94" viewBox="333.0 216 93.2 94"><rect x="334.6" y="218.0" width="90.0" height="89.7" fill="#fff" stroke="#505050" stroke-width="1.2"/><rect x="334.0" y="217.4" width="91.2" height="17.6" fill="#50b472"/><path d="M335.4 266.9 H424.2" stroke="#9a9a9a" stroke-width="1.4" stroke-dasharray="2.4 1.97" fill="none"/></svg>
    <div class="tc cht" style="left:334.0px;width:91.2px;">INTEREST</div>
    <div class="tc cv" style="left:331.7px;width:91.2px;">$3,789</div>
    <div class="t cp" style="left:352.6px;">14%</div>
    <svg class="a" style="left:335.8px;top:269px" width="9" height="10" viewBox="0 0 9 10"><path d="M4.5 0.8 L8.2 5 H6.2 V9 H2.8 V5 H0.8 Z" fill="#5cc283" stroke="#1d7a42" stroke-width="0.95" stroke-linejoin="round"/></svg>
    <svg class="a" style="left:341.9px;top:280.7px" width="75.5" height="12.6" viewBox="341.9 280.7 75.5 12.6"><polyline points="344.9,290.3 362.3,289.3 379.7,288.6 397.2,287.2 414.4,283.7" fill="none" stroke="#c9c9c9" stroke-width="0.8"/><g fill="#186a3c"><circle cx="344.9" cy="290.3" r="1.4"/><circle cx="362.3" cy="289.3" r="1.4"/><circle cx="379.7" cy="288.6" r="1.4"/><circle cx="397.2" cy="287.2" r="1.4"/><circle cx="414.4" cy="283.7" r="1.4"/></g></svg>
    <svg class="a" style="left:435.3px;top:216px" width="93.7" height="94" viewBox="435.3 216 93.7 94"><rect x="436.9" y="218.0" width="90.5" height="89.7" fill="#fff" stroke="#505050" stroke-width="1.2"/><rect x="436.3" y="217.4" width="91.7" height="17.6" fill="#50b472"/><path d="M437.7 266.9 H527.0" stroke="#9a9a9a" stroke-width="1.4" stroke-dasharray="2.4 1.97" fill="none"/></svg>
    <div class="tc cht" style="left:436.3px;width:91.7px;">DEPRECIATION</div>
    <div class="tc cv" style="left:434.0px;width:91.7px;">$5,547</div>
    <div class="t cp" style="left:454.9px;">9%</div>
    <svg class="a" style="left:438.1px;top:269px" width="9" height="10" viewBox="0 0 9 10"><path d="M4.5 0.8 L8.2 5 H6.2 V9 H2.8 V5 H0.8 Z" fill="#5cc283" stroke="#1d7a42" stroke-width="0.95" stroke-linejoin="round"/></svg>
    <svg class="a" style="left:444.2px;top:281.6px" width="75.6" height="11.7" viewBox="444.2 281.6 75.6 11.7"><polyline points="447.2,290.3 464.7,288.5 482.2,288.1 499.7,287.7 516.8,284.6" fill="none" stroke="#c9c9c9" stroke-width="0.8"/><g fill="#186a3c"><circle cx="447.2" cy="290.3" r="1.4"/><circle cx="464.7" cy="288.5" r="1.4"/><circle cx="482.2" cy="288.1" r="1.4"/><circle cx="499.7" cy="287.7" r="1.4"/><circle cx="516.8" cy="284.6" r="1.4"/></g></svg>
    <svg class="a" style="left:537.9px;top:216px" width="91.9" height="94" viewBox="537.9 216 91.9 94"><rect x="539.5" y="218.0" width="88.7" height="89.7" fill="#fff" stroke="#505050" stroke-width="1.2"/><rect x="538.9" y="217.4" width="89.9" height="17.6" fill="#50b472"/><path d="M540.3 266.9 H627.8" stroke="#9a9a9a" stroke-width="1.4" stroke-dasharray="2.4 1.97" fill="none"/></svg>
    <div class="tc cht" style="left:538.9px;width:89.9px;">NET PROFIT</div>
    <div class="tc cv" style="left:536.6px;width:89.9px;">$67,475</div>
    <div class="t cp" style="left:557.5px;">2%</div>
    <svg class="a" style="left:540.6999999999999px;top:269px" width="9" height="10" viewBox="0 0 9 10"><path d="M4.5 0.8 L8.2 5 H6.2 V9 H2.8 V5 H0.8 Z" fill="#5cc283" stroke="#1d7a42" stroke-width="0.95" stroke-linejoin="round"/></svg>
    <svg class="a" style="left:547.0px;top:281.6px" width="73.8" height="11.7" viewBox="547.0 281.6 73.8 11.7"><polyline points="550.0,290.3 567.1,288.5 583.7,287.7 600.8,285.0 617.8,284.6" fill="none" stroke="#c9c9c9" stroke-width="0.8"/><g fill="#186a3c"><circle cx="550.0" cy="290.3" r="1.4"/><circle cx="567.1" cy="288.5" r="1.4"/><circle cx="583.7" cy="287.7" r="1.4"/><circle cx="600.8" cy="285.0" r="1.4"/><circle cx="617.8" cy="284.6" r="1.4"/></g></svg>
    <div class="hl" style="top:321.4px;height:1.3px;"></div>
    <div class="t" style="left:131.4px;top:327px;font-size:11.5px;color:#a0a0a0;transform:scaleX(0.821);">ALL</div>
    <div class="t" style="left:154.4px;top:327px;font-size:11.5px;color:#a0a0a0;transform:scaleX(0.827);">METRICS</div>
    <div class="hl" style="top:339.6px;height:1.4px;"></div>
    <!-- table -->
    <div class="a green" style="left:129px;top:354.2px;width:500px;height:13.6px;"></div>
    <div class="a" style="left:129px;top:367.8px;width:500px;height:13.7px;background:#f1f1f1;"></div>
    <div class="a" style="left:129px;top:381.5px;width:500px;height:0.6px;background:#dcdcdc;"></div>
    <div class="a" style="left:129px;top:395px;width:500px;height:13.2px;background:#f1f1f1;"></div>
    <div class="a" style="left:129px;top:394.7px;width:500px;height:0.6px;background:#dcdcdc;"></div>
    <div class="t" style="left:138.6px;font-size:8.2px;font-weight:bold;color:#fff;top:357.9px;transform:scaleX(0.866);">METRIC</div>
    <div class="tr" style="left:220px;width:101px;font-size:8.2px;font-weight:bold;color:#fff;top:357.9px;transform:scaleX(0.934);">THIS YEAR (2014)</div>
    <div class="tr" style="left:322px;width:101.3px;font-size:8.2px;font-weight:bold;color:#fff;top:357.9px;transform:scaleX(0.934);">LAST YEAR (2013)</div>
    <div class="tc" style="left:452.2px;width:60px;font-size:8.2px;font-weight:bold;color:#fff;top:357.9px;transform:scaleX(0.854);">% CHANGE</div>
    <div class="t" style="left:529.8px;font-size:8.2px;font-weight:bold;color:#fff;top:357.9px;transform:scaleX(0.875);">5 YEAR TREND</div>
    <div class="t cell" style="left:137.6px;top:370.4px;word-spacing:2px;transform:scaleX(0.735);">REVENUES</div>
    <div class="tr cell" style="left:240px;width:81px;top:370.4px;transform:scaleX(0.857);">$180,583.88</div>
    <div class="tr cell" style="left:342px;width:81.4px;top:370.4px;transform:scaleX(0.857);">$180,026.64</div>
    <svg class="a" style="left:437.6px;top:370.59999999999997px" width="8.3" height="9.2" viewBox="0 0 9 10"><path d="M4.5 0.8 L8.2 5 H6.2 V9 H2.8 V5 H0.8 Z" fill="#5cc283" stroke="#1d7a42" stroke-width="0.95" stroke-linejoin="round"/></svg>
    <div class="tc cell" style="left:462px;width:40px;top:370.4px;transform:scaleX(0.88);">0%</div>
    <svg class="a" style="left:536.0px;top:368.0px" width="83.8" height="12.8" viewBox="536.0 368.0 83.8 12.8"><polyline points="539.0,377.8 558.2,376.1 578.3,373.6 597.6,371.5 616.8,371.0" fill="none" stroke="#c9c9c9" stroke-width="0.8"/><g fill="#186a3c"><circle cx="539.0" cy="377.8" r="1.4"/><circle cx="558.2" cy="376.1" r="1.4"/><circle cx="578.3" cy="373.6" r="1.4"/><circle cx="597.6" cy="371.5" r="1.4"/><circle cx="616.8" cy="371.0" r="1.4"/></g></svg>
    <div class="t cell" style="left:137.6px;top:383.9px;word-spacing:2px;transform:scaleX(0.735);">OPERATING EXPENSES</div>
    <div class="tr cell" style="left:240px;width:81px;top:383.9px;transform:scaleX(0.857);">$94,419.46</div>
    <div class="tr cell" style="left:342px;width:81.4px;top:383.9px;transform:scaleX(0.857);">$80,883.33</div>
    <svg class="a" style="left:437.6px;top:384.09999999999997px" width="8.3" height="9.2" viewBox="0 0 9 10"><path d="M4.5 0.8 L8.2 5 H6.2 V9 H2.8 V5 H0.8 Z" fill="#5cc283" stroke="#1d7a42" stroke-width="0.95" stroke-linejoin="round"/></svg>
    <div class="tc cell" style="left:462px;width:40px;top:383.9px;transform:scaleX(0.88);">17%</div>
    <svg class="a" style="left:536.0px;top:381.9px" width="83.8" height="12.7" viewBox="536.0 381.9 83.8 12.7"><polyline points="539.0,391.6 558.2,390.3 578.3,389.5 597.6,389.5 616.8,384.9" fill="none" stroke="#c9c9c9" stroke-width="0.8"/><g fill="#186a3c"><circle cx="539.0" cy="391.6" r="1.4"/><circle cx="558.2" cy="390.3" r="1.4"/><circle cx="578.3" cy="389.5" r="1.4"/><circle cx="597.6" cy="389.5" r="1.4"/><circle cx="616.8" cy="384.9" r="1.4"/></g></svg>
    <div class="t cell" style="left:137.6px;top:398.2px;word-spacing:2px;transform:scaleX(0.735);">OPERATING PROFIT</div>
    <div class="tr cell" style="left:240px;width:81px;top:398.2px;transform:scaleX(0.857);">$73,426.00</div>
    <div class="tr cell" style="left:342px;width:81.4px;top:398.2px;transform:scaleX(0.857);">$77,317.84</div>
    <svg class="a" style="left:437.6px;top:398.4px" width="8.3" height="9.2" viewBox="0 0 9 10"><path d="M4.5 9.2 L8.2 5 H6.2 V1 H2.8 V5 H0.8 Z" fill="#f0797e" stroke="#d5343a" stroke-width="0.95" stroke-linejoin="round"/></svg>
    <div class="tc cell" style="left:462px;width:40px;top:398.2px;transform:scaleX(0.88);">-5%</div>
    <svg class="a" style="left:536.0px;top:395.7px" width="83.8" height="12.3" viewBox="536.0 395.7 83.8 12.3"><polyline points="539.0,405.0 558.2,400.0 578.3,399.1 597.6,398.7 616.8,401.6" fill="none" stroke="#c9c9c9" stroke-width="0.8"/><g fill="#186a3c"><circle cx="539.0" cy="405.0" r="1.4"/><circle cx="558.2" cy="400.0" r="1.4"/><circle cx="578.3" cy="399.1" r="1.4"/><circle cx="597.6" cy="398.7" r="1.4"/><circle cx="616.8" cy="401.6" r="1.4"/></g></svg>
    <!-- ===== sheet tabs ===== -->
    <div class="a" style="left:104px;top:408.2px;width:653px;height:17px;background:#ececec;border-top:0.6px solid #cfcfcf;box-sizing:border-box;"></div>
    <div class="a" style="left:104px;top:422.4px;width:653px;height:2.8px;background:#f5f5f5;"></div>
    <svg class="a" style="left:111px;top:412px" width="21" height="8" viewBox="111 412 21 8"><path d="M116.6 412.6 V419 L112 415.8 Z M125.6 412.6 V419 L130.2 415.8 Z" fill="#4a4a4a"/></svg>
    <svg class="a" style="left:136px;top:407px" width="43" height="17" viewBox="136 407 43 17"><path d="M137.9 407.6 V420.2 Q137.9 422.2 139.9 422.2 H174.6 Q176.6 422.2 176.6 420.2 V407.6 Z" fill="#fff" stroke="#c6c6c6" stroke-width="0.7"/></svg>
    <div class="a" style="left:177.4px;top:407.9px;width:37.8px;height:1.9px;background:#5b9bd5;"></div>
    <div class="a" style="left:253.5px;top:407.9px;width:37.8px;height:1.9px;background:#6fbf8a;"></div>
    <div class="tc sht" style="left:137.7px;width:39px;color:#1f7f45;">Sheet 1</div>
    <div class="tc sht" style="left:177.4px;width:37.8px;">Sheet 2</div>
    <div class="tc sht" style="left:215.4px;width:37.8px;">Sheet 3</div>
    <div class="tc sht" style="left:253.5px;width:37.8px;">Sheet 4</div>
    <div class="t sht" style="left:304px;">Sheet 5</div>
    <svg class="a" style="left:296px;top:411px" width="7" height="9" viewBox="296 411 7 9"><rect x="297" y="414.8" width="4.6" height="3.6" rx="0.5" fill="#444"/><path d="M298 414.8 V413.6 Q299.3 411.8 300.6 413.6 V414.8" fill="none" stroke="#444" stroke-width="0.8"/></svg>
    <svg class="a" style="left:214.2px;top:409.4px" width="3" height="12.6" viewBox="214.2 409.4 3 12.6"><path d="M215.50 409.40 V422.00" stroke="#dadada" stroke-width="0.7"/></svg>
    <svg class="a" style="left:252.3px;top:409.4px" width="3" height="12.6" viewBox="252.3 409.4 3 12.6"><path d="M253.60 409.40 V422.00" stroke="#dadada" stroke-width="0.7"/></svg>
    <svg class="a" style="left:290.4px;top:409.4px" width="3" height="12.6" viewBox="290.4 409.4 3 12.6"><path d="M291.70 409.40 V422.00" stroke="#dadada" stroke-width="0.7"/></svg>
    <svg class="a" style="left:328.6px;top:409.4px" width="3" height="12.6" viewBox="328.6 409.4 3 12.6"><path d="M329.90 409.40 V422.00" stroke="#dadada" stroke-width="0.7"/></svg>
    <svg class="a" style="left:353.0px;top:409.4px" width="3" height="12.6" viewBox="353.0 409.4 3 12.6"><path d="M354.30 409.40 V422.00" stroke="#dadada" stroke-width="0.7"/></svg>
    <svg class="a" style="left:339px;top:413px" width="8" height="8" viewBox="339 413 8 8"><path d="M343 412.8 V418.8 M340 415.8 H346" stroke="#444" stroke-width="1.1"/></svg>
    <!-- ===== status bar ===== -->
    <div class="a" style="left:104px;top:425.2px;width:653px;height:14px;background:#217346;"></div>
    <div class="t sbt" style="left:112.4px;">Average: 100</div>
    <div class="t sbt" style="left:163.8px;">Count: 4</div>
    <div class="t sbt" style="left:201px;">Sum: 399</div>
    <div class="a" style="left:613px;top:425.2px;width:18.8px;height:14px;background:#1c663d;"></div>
    <svg class="a" style="left:617px;top:426px" width="35" height="12" viewBox="617 426 35 12"><g fill="none" stroke="#e8efe9" stroke-width="0.7"><rect x="619.4" y="428.8" width="6.6" height="6.6"/><path d="M621.6 428.8 V435.4 M623.8 428.8 V435.4 M619.4 431 H626 M619.4 433.2 H626"/><rect x="638.4" y="428.8" width="7.6" height="6.6" rx="0.8" stroke="#c4d9cb"/><path d="M640.6 429.6 V434.6 M643.8 429.6 V434.6" stroke="#c4d9cb" stroke-width="0.9"/></g></svg>
    <div class="a" style="left:662.8px;top:431.8px;width:62.8px;height:1px;background:#175a36;"></div>
    <div class="a" style="left:691.6px;top:429.6px;width:5.4px;height:5.4px;border-radius:50%;background:#fff;"></div>
    <div class="t sbt" style="left:731.4px;">100%</div>

  </div></div>
</div>
</body>
</html>
